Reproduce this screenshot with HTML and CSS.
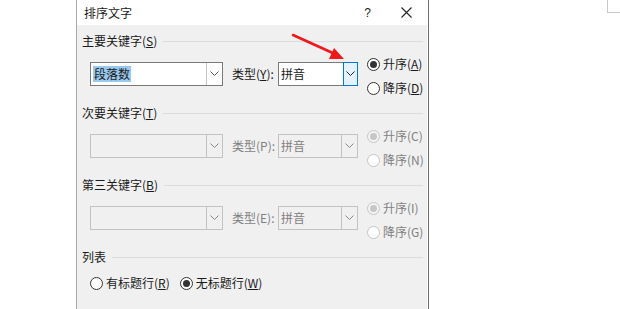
FILE: index.html
```html
<!DOCTYPE html>
<html lang="zh-CN">
<head>
	<meta charset="UTF-8">
	<title>排序文字</title>
	<link rel="stylesheet" href="styles.css">
</head>
<body>
	<div class="page">
		<div class="dialog">
			<div class="titlebar">
				<span class="title">排序文字</span>
				<span class="tb-btn help">?</span>
				<span class="tb-btn close">
					<svg width="11" height="11" viewBox="0 0 11 11"><path d="M0.5 0.5L10.5 10.5M10.5 0.5L0.5 10.5" stroke="#222" stroke-width="1.1"/></svg>
				</span>
			</div>
			<div class="dlg-body">
				<!-- 主要关键字 -->
				<div class="group-title"><span>主要关键字(<u>S</u>)</span></div>
				<div class="key-row">
					<div class="combo combo-key">
						<div class="combo-text"><span class="sel">段落数</span></div>
						<div class="combo-btn"><svg width="9" height="6" viewBox="0 0 9 6"><path d="M0.5 0.5L4.5 4.5L8.5 0.5" fill="none" stroke="#555"/></svg></div>
					</div>
					<label class="type-label">类型(<u>Y</u>):</label>
					<div class="combo combo-type">
						<div class="combo-text">拼音</div>
						<div class="combo-btn hot"><svg width="9" height="6" viewBox="0 0 9 6"><path d="M0.5 0.5L4.5 4.5L8.5 0.5" fill="none" stroke="#222"/></svg></div>
					</div>
					<div class="order">
						<div class="radio checked"><i></i>升序(<u>A</u>)</div>
						<div class="radio"><i></i>降序(<u>D</u>)</div>
					</div>
				</div>

				<!-- 次要关键字 -->
				<div class="group-title"><span>次要关键字(<u>T</u>)</span></div>
				<div class="key-row disabled">
					<div class="combo combo-key">
						<div class="combo-text"></div>
						<div class="combo-btn"><svg width="9" height="6" viewBox="0 0 9 6"><path d="M0.5 0.5L4.5 4.5L8.5 0.5" fill="none" stroke="#888"/></svg></div>
					</div>
					<label class="type-label">类型(P):</label>
					<div class="combo combo-type">
						<div class="combo-text">拼音</div>
						<div class="combo-btn"><svg width="9" height="6" viewBox="0 0 9 6"><path d="M0.5 0.5L4.5 4.5L8.5 0.5" fill="none" stroke="#888"/></svg></div>
					</div>
					<div class="order">
						<div class="radio checked"><i></i>升序(C)</div>
						<div class="radio"><i></i>降序(N)</div>
					</div>
				</div>

				<!-- 第三关键字 -->
				<div class="group-title"><span>第三关键字(<u>B</u>)</span></div>
				<div class="key-row disabled">
					<div class="combo combo-key">
						<div class="combo-text"></div>
						<div class="combo-btn"><svg width="9" height="6" viewBox="0 0 9 6"><path d="M0.5 0.5L4.5 4.5L8.5 0.5" fill="none" stroke="#888"/></svg></div>
					</div>
					<label class="type-label">类型(E):</label>
					<div class="combo combo-type">
						<div class="combo-text">拼音</div>
						<div class="combo-btn"><svg width="9" height="6" viewBox="0 0 9 6"><path d="M0.5 0.5L4.5 4.5L8.5 0.5" fill="none" stroke="#888"/></svg></div>
					</div>
					<div class="order">
						<div class="radio checked"><i></i>升序(I)</div>
						<div class="radio"><i></i>降序(G)</div>
					</div>
				</div>

				<!-- 列表 -->
				<div class="group-title"><span>列表</span></div>
				<div class="list-row">
					<div class="radio"><i></i>有标题行(<u>R</u>)</div>
					<div class="radio checked"><i></i>无标题行(<u>W</u>)</div>
				</div>
			</div>
		</div>
	</div>

	<svg class="arrow" width="70" height="40" viewBox="0 0 70 40">
		<path d="M2 2L44 21" stroke="#f01818" stroke-width="2.6" stroke-linecap="round"/>
		<path d="M53 26L38 26L43 15Z" fill="#f01818"/>
	</svg>
	<div class="corner-mark"></div>
</body>
</html>
```

FILE: styles.css
```css
* {
	box-sizing: border-box;
}

html, body {
	margin: 0;
	height: 309px;
	overflow: hidden;
	background: #fff;
}

body {
	position: relative;
	font-family: "Noto Sans CJK SC", "Microsoft YaHei", sans-serif;
	font-size: 12px;
	color: #1a1a1a;
}

.page {
	padding-left: 76px;
}

.dialog {
	width: 352px;
	height: 309px;
	border-left: 1px solid #a9a9a9;
	border-right: 1px solid #fff;
	box-shadow: 1px 0 0 #6f6f6f;
	display: flex;
	flex-direction: column;
}

.titlebar {
	height: 25px;
	background: #fff;
	display: flex;
	align-items: center;
	padding: 0 1px 0 7px;
}

.title {
	flex: 1;
	line-height: 16px;
}

.tb-btn {
	width: 39px;
	height: 25px;
	display: flex;
	align-items: center;
	justify-content: center;
}

.help {
	font-family: "Liberation Sans", sans-serif;
	font-size: 12px;
}

.dlg-body {
	flex: 1;
	background: #f0f0f0;
	padding: 8px 4px 0 5px;
}

u {
	text-decoration: underline;
	text-underline-offset: 1px;
}

.group-title {
	display: flex;
	align-items: center;
	height: 16px;
	line-height: 16px;
	margin-top: 5px;
}

.group-title:first-child {
	margin-top: 0;
}

.group-title::after {
	content: "";
	flex: 1;
	border-top: 1px solid #dcdcdc;
	margin-left: 6px;
}

.key-row {
	display: flex;
	align-items: flex-start;
	margin: 3px 0 0 8px;
	height: 48px;
}

.combo {
	display: flex;
	flex-shrink: 0;
	height: 24px;
	margin-top: 10px;
	background: #fff;
	border: 1px solid #7a7a7a;
}

.combo-key {
	width: 133px;
}

.combo-type {
	width: 80px;
}

.combo-text {
	flex: 1;
	padding-left: 2px;
	display: flex;
	align-items: center;
	line-height: 16px;
}

.sel {
	background: #99c9ef;
	padding: 0 1px;
}

.combo-btn {
	width: 16px;
	display: flex;
	align-items: center;
	justify-content: center;
	border-left: 1px solid #c4c4c4;
}

.combo-btn.hot {
	background: #e5f1fb;
	border: 1px solid #0078d7;
	margin: -1px -1px -1px 0;
	width: 15px;
}

.type-label {
	flex-shrink: 0;
	width: 46px;
	margin: 10px 0 0 9px;
	height: 24px;
	line-height: 24px;
	white-space: nowrap;
}

.order {
	flex-shrink: 0;
	margin-left: 9px;
	display: flex;
	flex-direction: column;
}

.radio {
	display: flex;
	align-items: center;
	height: 24px;
	line-height: 16px;
	white-space: nowrap;
}

.radio i {
	flex-shrink: 0;
	width: 13px;
	height: 13px;
	border: 1px solid #333;
	border-radius: 50%;
	background: #fff;
	margin-right: 3px;
	display: flex;
	align-items: center;
	justify-content: center;
}

.radio.checked i::after {
	content: "";
	width: 7px;
	height: 7px;
	border-radius: 50%;
	background: #333;
}

.disabled {
	color: #7f7f7f;
}

.disabled .combo {
	background: #f0f0f0;
	border-color: #c2c2c2;
}

.disabled .combo-btn {
	border-left-color: #c2c2c2;
}

.disabled .radio i {
	border-color: #c6c6c6;
	background: #fff;
}

.disabled .radio.checked i {
	background: #f4f4f4;
}

.disabled .radio.checked i::after {
	background: #c6c6c6;
}

.list-row {
	display: flex;
	margin: 10px 0 0 8px;
	gap: 10px;
}

.list-row .radio {
	height: 16px;
}

.arrow {
	position: absolute;
	left: 291px;
	top: 33px;
}

.corner-mark {
	position: absolute;
	left: 607px;
	top: 0;
	width: 13px;
	height: 13px;
	border-left: 1px solid #c8c8c8;
	border-bottom: 1px solid #c8c8c8;
}
```
